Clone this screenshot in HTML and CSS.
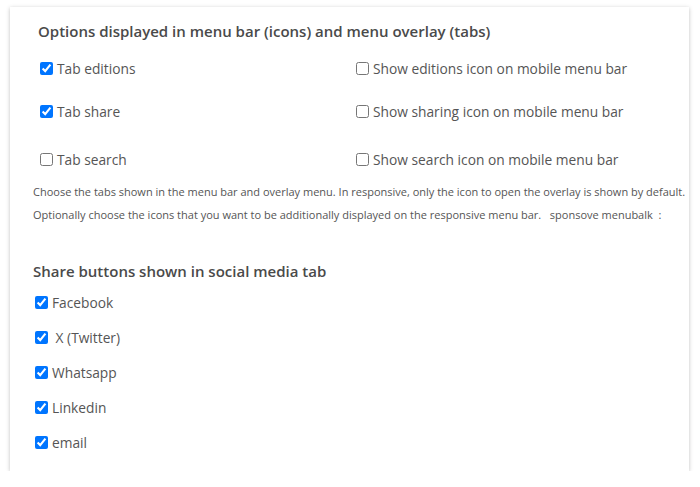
FILE: index.html
```html
<!DOCTYPE html>
<html lang="en">
<head>
    <meta charset="UTF-8">
    <title>Menu options</title>
    <link rel="stylesheet" href="styles.css">
</head>
<body>
    <div class="settings-card">
        <div class="section menu-options">
            <h3 class="section-title">Options displayed in menu bar (icons) and menu overlay (tabs)</h3>
            <div class="option-grid">
                <label class="option"><input type="checkbox" checked> Tab editions</label>
                <label class="option"><input type="checkbox"> Show editions icon on mobile menu bar</label>
                <label class="option"><input type="checkbox" checked> Tab share</label>
                <label class="option"><input type="checkbox"> Show sharing icon on mobile menu bar</label>
                <label class="option row-last"><input type="checkbox"> Tab search</label>
                <label class="option row-last"><input type="checkbox"> Show search icon on mobile menu bar</label>
            </div>
        </div>

        <p class="help">Choose the tabs shown in the menu bar and overlay menu. In responsive, only the icon to open the overlay is shown by default.</p>
        <p class="help">Optionally choose the icons that you want to be additionally displayed on the responsive menu bar. &nbsp;&nbsp;sponsove menubalk &nbsp;:</p>

        <div class="section share-options">
            <h3 class="section-title">Share buttons shown in social media tab</h3>
            <label class="option"><input type="checkbox" checked> Facebook</label>
            <label class="option"><input type="checkbox" checked> &nbsp;X (Twitter)</label>
            <label class="option"><input type="checkbox" checked> Whatsapp</label>
            <label class="option"><input type="checkbox" checked> Linkedin</label>
            <label class="option"><input type="checkbox" checked> email</label>
        </div>
    </div>
</body>
</html>
```

FILE: styles.css
```css
body {
    margin: 0;
    background: #fff;
    font-family: 'Open Sans', 'Noto Sans', sans-serif;
    color: #555;
}

.settings-card {
    margin: 7px 0 0 10px;
    width: 679px;
    height: 464px;
    box-sizing: border-box;
    padding: 14px 0 0 23px;
    background: #fff;
    box-shadow: 0 1px 4px rgba(0, 0, 0, 0.25);
}

.section-title {
    margin: 0;
    font-size: 15px;
    font-weight: 600;
    color: #4a4a4a;
}

.menu-options {
    padding-left: 5px;
}

.option-grid {
    display: grid;
    grid-template-columns: 316px 1fr;
    margin-top: 17px;
}

.option {
    display: flex;
    align-items: center;
    height: 20px;
    font-size: 13.75px;
    color: #555;
    white-space: nowrap;
}

.option-grid .option {
    margin-bottom: 23px;
}

.option-grid .row-last {
    margin-top: 5px;
    margin-bottom: 0;
}

.option input {
    width: 13px;
    height: 13px;
    margin: 0 4px 0 2px;
    accent-color: #0075ff;
}

.help {
    margin: 11px 0 0;
    font-size: 11px;
    line-height: 23px;
    color: #555;
    white-space: nowrap;
}

.help + .help {
    margin-top: 0;
}

.share-options {
    margin-top: 35px;
}

.share-options .section-title {
    margin-bottom: 4px;
}

.share-options .option {
    height: 35px;
}
```
